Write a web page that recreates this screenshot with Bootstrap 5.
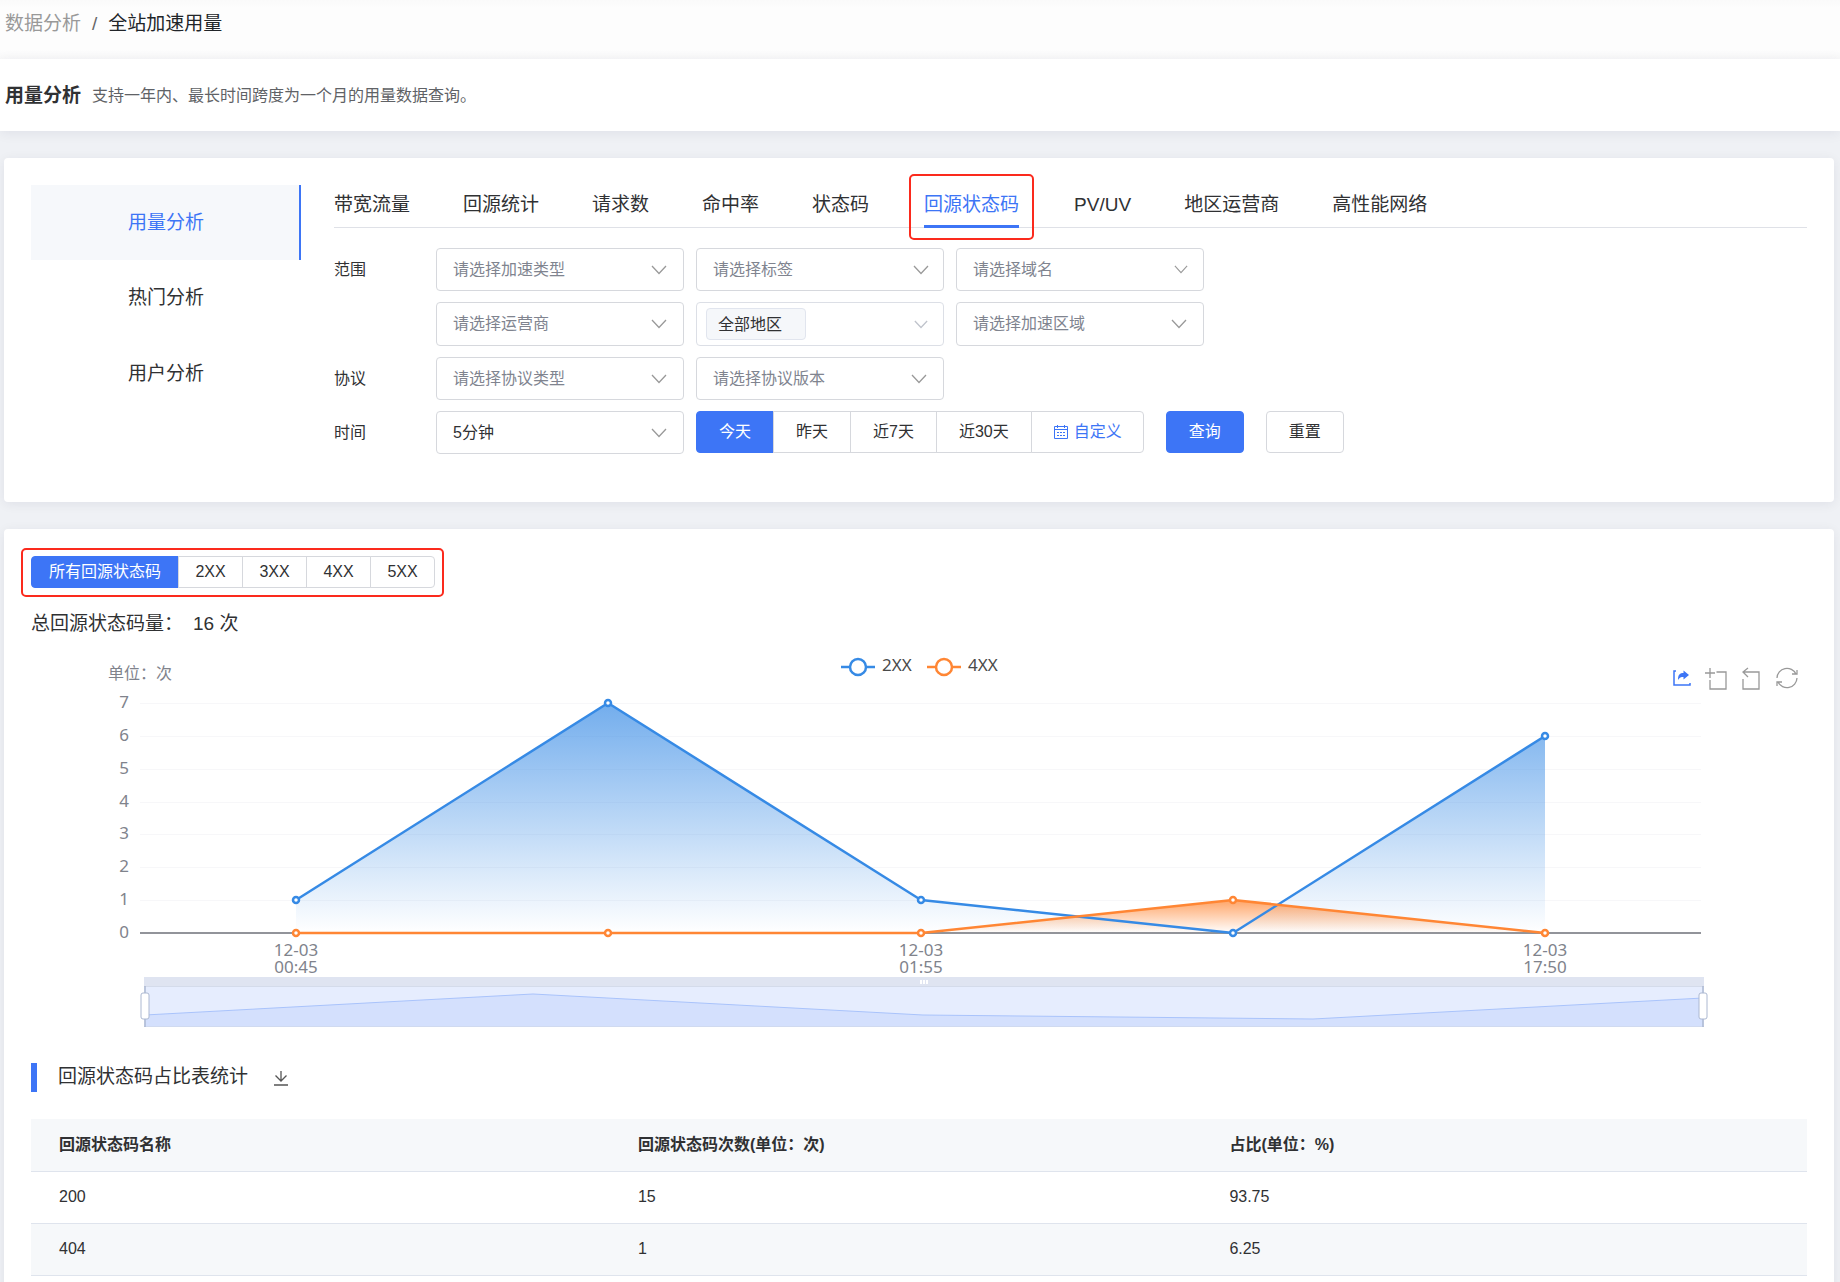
<!DOCTYPE html>
<html lang="zh-CN">
<head>
<meta charset="utf-8">
<meta name="viewport" content="width=device-width, initial-scale=1">
<title>全站加速用量</title>
<link href="https://cdn.jsdelivr.net/npm/bootstrap@5.3.0/dist/css/bootstrap.min.css" rel="stylesheet">
<style>
:root { --main: #3d75f6; --ink: #303133; --line: #d6d8dd; --alert: #fb2a1d; }
body { font: 16px/24px "Liberation Sans", "Noto Sans CJK SC", sans-serif; color: var(--ink); background: #eff1f5; }
a { text-decoration: none; color: inherit; }
.crumb-bar { height: 59px; padding: 0 5px 12px; font-size: 19px; background: linear-gradient(#fafafa, #fdfdfd 8px, #fdfdfd 50px, #f9f9fa); gap: 11px; }
.crumb-bar a { color: #999; }
.crumb-bar span { color: #666; }
.title-bar { height: 72px; padding: 2px 5px 0; gap: 11px; background: #fff; box-shadow: 0 2px 12px rgba(0,0,50,.07); }
.title-bar h1 { font-size: 19px; line-height: 24px; }
.title-bar p { color: #606266; }
main { padding: 27px 6px 0 4px; }
.panel { background: #fff; border-radius: 4px; padding: 27px; box-shadow: 0 2px 12px rgba(0,0,50,.07); }
.panel + .panel { margin-top: 27px; padding-bottom: 0; }
.filter-panel { min-height: 344px; }
.side { width: 270px; margin-right: 33px; font-size: 19px; }
.side a { height: 76px; }
.side .on { height: 75px; color: var(--main); background: #f6f8fb; box-shadow: inset -2px 0 var(--main); }
.tabs { height: 43px; gap: 53px; font-size: 19px; border-bottom: 1px solid #dfe1e7; margin-bottom: 20px; }
.tabs a { height: 43px; line-height: 40px; position: relative; white-space: nowrap; }
.tabs .on { margin: 0 2px; color: var(--main); border-bottom: 3px solid var(--main); }
.tabs .on::after { content: ""; position: absolute; inset: -11px -15px -15px; border: 2px solid var(--alert); border-radius: 5px; }
.filters { gap: 11px; }
.filters .label-col { width: 102px; }
.line-row { gap: 12px; }
.pick { width: 248px; height: 43px; padding: 0 40px 0 16px; font-size: 16px; line-height: 24px; color: #80848f; border: 1px solid var(--line); border-radius: 4px;
  background: #fff url("data:image/svg+xml,%3Csvg xmlns='http://www.w3.org/2000/svg' width='16' height='10' fill='none' stroke='%23999' stroke-width='1.3'%3E%3Cpath d='M1 1l7 7.500 7-7.500'/%3E%3C/svg%3E") no-repeat right 16px center / 16px 10px; }
.pick.set { color: var(--ink); }
.pick.near { background-position: right 14px center; }
.pick.slim { background-size: 14px 9px; background-position: right 15px center; }
.pick.tagged { height: 44px; padding: 0 9px; border-color: #dcdfe6; text-align: left;
  background-image: url("data:image/svg+xml,%3Csvg xmlns='http://www.w3.org/2000/svg' viewBox='0 0 16 10' width='16' height='10' fill='none' stroke='%23c0c4cc' stroke-width='1.500'%3E%3Cpath d='M1 1l7 7.500 7-7.500'/%3E%3C/svg%3E"); }
.pick.tall { height: 44px; }
.tag { display: inline-block; width: 100px; height: 32px; line-height: 32px; padding-left: 11px; color: var(--ink); background: #f5f7fa; border: 1px solid #e1e5ee; border-radius: 4px; }
.btn { --bs-btn-font-size: 16px; --bs-btn-line-height: 24px; --bs-btn-border-radius: 4px; --bs-btn-color: #303133; --bs-btn-border-color: #d6d8dd; --bs-btn-bg: #fff; }
.btn.on { --bs-btn-color: #fff; --bs-btn-bg: #3d75f6; --bs-btn-border-color: #3d75f6; }
.filters .btn { height: 42px; --bs-btn-padding-x: 22px; --bs-btn-padding-y: 8px; }
.filters .custom { --bs-btn-color: #3d75f6; --bs-btn-padding-x: 21px; gap: 5px; }
.act { margin-left: 10px; }
.codes { position: relative; }
.codes::after { content: ""; position: absolute; inset: -8px -9px -9px -10px; border: 2px solid var(--alert); border-radius: 5px; pointer-events: none; }
.codes .btn { height: 32px; min-width: 65px; --bs-btn-padding-x: 16px; --bs-btn-padding-y: 3px; }
.codes .on { --bs-btn-padding-x: 17px; }
.total { font-size: 19px; margin-top: 24px; gap: 10px; }
.chart { margin-top: 11px; position: relative; }
.chart svg { display: block; }
.chart text { font: 17px "Noto Sans", "Noto Sans CJK SC", sans-serif; fill: #80838c; }
.chart .key { fill: #4a4a4a; }
.chart .unit { font-size: 16px; }
.tools { position: absolute; right: 8px; top: 19px; gap: 11px; }
.tools button, .sub button { border: 0; padding: 0; background: none; width: 24px; height: 24px; }
.sub { margin-top: 28px; height: 29px; border-left: 6px solid var(--main); padding: 0 0 2px 21px; font-size: 19px; gap: 21px; }
.sub h2 { font-size: 19px; line-height: 24px; font-weight: 400; }
.data { margin: 27px 0 0; color: var(--ink); border-bottom: 1px solid #dfe4ed; }
.data > :not(caption) > * > * { height: 52px; padding: 0 28px; vertical-align: middle; border-bottom: 1px solid #dfe4ed; background: #fff; color: var(--ink); }
.data > thead > tr > th, .data > tbody > tr:nth-child(even) > td { background: #f6f8fa; }
.c1 { width: 32.6%; } .c2 { width: 33.3%; }
</style>
<script src="https://cdn.jsdelivr.net/npm/bootstrap@5.3.0/dist/js/bootstrap.bundle.min.js"></script>
</head>
<body>
<nav class="crumb-bar d-flex align-items-center" aria-label="breadcrumb"><a href="#">数据分析</a><span>/</span><a href="#" class="text-dark">全站加速用量</a></nav>
<header class="title-bar d-flex align-items-center"><h1 class="fw-bold mb-0">用量分析</h1><p class="mb-0">支持一年内、最长时间跨度为一个月的用量数据查询。</p></header>
<main>
<section class="panel filter-panel d-flex">
  <nav class="side flex-shrink-0">
    <a href="#" class="on d-flex align-items-center justify-content-center">用量分析</a>
    <a href="#" class="d-flex align-items-center justify-content-center">热门分析</a>
    <a href="#" class="d-flex align-items-center justify-content-center">用户分析</a>
  </nav>
  <div class="flex-grow-1">
    <nav class="tabs d-flex"><a href="#">带宽流量</a><a href="#">回源统计</a><a href="#">请求数</a><a href="#">命中率</a><a href="#">状态码</a><a href="#" class="on">回源状态码</a><a href="#">PV/UV</a><a href="#">地区运营商</a><a href="#">高性能网络</a></nav>
    <form class="filters d-flex flex-column">
      <div class="d-flex align-items-center"><label class="label-col" for="accel">范围</label>
        <div class="line-row d-flex">
          <select id="accel" class="form-select pick"><option>请选择加速类型</option></select>
          <select class="form-select pick near" aria-label="标签"><option>请选择标签</option></select>
          <select class="form-select pick slim" aria-label="域名"><option>请选择域名</option></select>
        </div></div>
      <div class="d-flex align-items-center"><span class="label-col"></span>
        <div class="line-row d-flex">
          <select class="form-select pick tall" aria-label="运营商"><option>请选择运营商</option></select>
          <button type="button" class="form-select pick slim tagged" aria-label="地区"><span class="tag">全部地区</span></button>
          <select class="form-select pick tall" aria-label="加速区域"><option>请选择加速区域</option></select>
        </div></div>
      <div class="d-flex align-items-center"><label class="label-col" for="proto">协议</label>
        <div class="line-row d-flex">
          <select id="proto" class="form-select pick"><option>请选择协议类型</option></select>
          <select class="form-select pick" aria-label="协议版本"><option>请选择协议版本</option></select>
        </div></div>
      <div class="d-flex align-items-center"><label class="label-col" for="step">时间</label>
        <div class="line-row d-flex">
          <select id="step" class="form-select pick set"><option>5分钟</option></select>
          <div class="btn-group">
            <button type="button" class="btn on">今天</button><button type="button" class="btn">昨天</button><button type="button" class="btn">近7天</button><button type="button" class="btn">近30天</button>
            <button type="button" class="btn custom d-flex align-items-center"><svg width="16" height="16" viewBox="0 0 16 16" fill="none" stroke="currentColor"><path d="M1.500 2.500h13v12h-13zM1.500 5.500h13M4.500 1v3M11.500 1v3M4 8.500h2M7 8.500h2M10 8.500h2M4 11.500h2M7 11.500h2M10 11.500h2"/></svg>自定义</button>
          </div>
          <button type="button" class="btn on act">查询</button>
          <button type="reset" class="btn act">重置</button>
        </div></div>
    </form>
  </div>
</section>
<section class="panel">
  <div class="btn-group codes"><button type="button" class="btn on">所有回源状态码</button><button type="button" class="btn">2XX</button><button type="button" class="btn">3XX</button><button type="button" class="btn">4XX</button><button type="button" class="btn">5XX</button></div>
  <div class="total d-flex"><span>总回源状态码量：</span><span>16 次</span></div>
  <div class="chart">
    <svg width="100%" viewBox="0 0 1776 388">
      <defs>
        <linearGradient id="gb" x1="0" y1="0" x2="0" y2="1"><stop offset="0" stop-color="#368ae5" stop-opacity=".7"/><stop offset="1" stop-color="#368ae5" stop-opacity="0"/></linearGradient>
        <linearGradient id="go" x1="0" y1="0" x2="0" y2="1"><stop offset="0" stop-color="#ff8634" stop-opacity=".75"/><stop offset="1" stop-color="#ff8634" stop-opacity="0"/></linearGradient>
      </defs>
      <text class="unit" x="77" y="32">单位：次</text>
      <g fill="#fff" stroke-width="2.500">
        <path d="M810 20h34" stroke="#368ae5"/><circle cx="827" cy="20" r="8" stroke="#368ae5"/>
        <path d="M896 20h34" stroke="#ff8634"/><circle cx="913" cy="20" r="8" stroke="#ff8634"/>
      </g>
      <text class="key" x="851" y="24">2XX</text><text class="key" x="937" y="24">4XX</text>
      <path d="M109 56H1670M109 89H1670M109 122H1670M109 155H1670M109 187H1670M109 220H1670M109 253H1670" stroke="#f7f7f9" shape-rendering="crispEdges"/>
      <path d="M109 286H1670" stroke="#6e7079" stroke-width="1.500"/>
      <g text-anchor="end"><text x="98" y="61">7</text><text x="98" y="94">6</text><text x="98" y="127">5</text><text x="98" y="160">4</text><text x="98" y="192">3</text><text x="98" y="225">2</text><text x="98" y="258">1</text><text x="98" y="291">0</text></g>
      <path d="M265 286V253L577 56L890 253L1202 286L1514 89V286z" fill="url(#gb)"/>
      <path d="M890 286L1202 253L1514 286z" fill="url(#go)"/>
      <path d="M265 253L577 56L890 253L1202 286L1514 89" fill="none" stroke="#368ae5" stroke-width="2.500" stroke-linejoin="round"/>
      <path d="M265 286H890L1202 253L1514 286" fill="none" stroke="#ff8634" stroke-width="2.500" stroke-linejoin="round"/>
      <g fill="#fff" stroke="#368ae5" stroke-width="2.500"><circle cx="265" cy="253" r="3"/><circle cx="577" cy="56" r="3"/><circle cx="890" cy="253" r="3"/><circle cx="1202" cy="286" r="3"/><circle cx="1514" cy="89" r="3"/></g>
      <g fill="#fff" stroke="#ff8634" stroke-width="2.500"><circle cx="265" cy="286" r="3"/><circle cx="577" cy="286" r="3"/><circle cx="890" cy="286" r="3"/><circle cx="1202" cy="253" r="3"/><circle cx="1514" cy="286" r="3"/></g>
      <g text-anchor="middle">
        <text><tspan x="265" y="309">12-03</tspan><tspan x="265" dy="17">00:45</tspan></text>
        <text><tspan x="890" y="309">12-03</tspan><tspan x="890" dy="17">01:55</tspan></text>
        <text><tspan x="1514" y="309">12-03</tspan><tspan x="1514" dy="17">17:50</tspan></text>
      </g>
      <path d="M113 330h1560v50H113z" fill="#e6edfe"/>
      <path d="M113 330h1560v9H113z" fill="#dfe4f1"/><path d="M113 339.500h1560" stroke="#d4dbea"/>
      <path d="M114 368L502 347L892 368L1282 372L1672 351V380H114z" fill="#d4e0fd"/>
      <path d="M114 368L502 347L892 368L1282 372L1672 351" fill="none" stroke="#a9c3fb"/>
      <path d="M113 379.500h1560" stroke="#d0daf0"/>
      <path d="M889 335h2m1 0h2m1 0h2" stroke="#fff" stroke-width="4"/>
      <path d="M114 339v41M1672 339v41" stroke="#acb8d1" stroke-width="1.500"/>
      <g fill="#fff" stroke="#acb8d1"><rect x="110" y="346" width="8" height="26" rx="2"/><rect x="1668" y="346" width="8" height="26" rx="2"/></g>
    </svg>
    <div class="tools d-flex">
      <button type="button" aria-label="导出"><svg width="24" height="24" fill="none" stroke="#3d75f6" stroke-width="1.500"><path d="M6 5H4v14h16v-2"/><path d="M8 14C8 8.500 10 7 13.500 7V4.500L19 9l-5.500 4.500V11C11 11 9.500 11.500 8 14z" fill="#3d75f6" stroke="none"/></svg></button>
      <button type="button" aria-label="区域缩放"><svg width="24" height="24" fill="none" stroke="#999" stroke-width="1.300"><path d="M0 7h10M5 2v10M11.500 6H21v17H5v-9"/></svg></button>
      <button type="button" aria-label="缩放还原"><svg width="24" height="24" fill="none" stroke="#999" stroke-width="1.300"><path d="M8 2L3 6l5 5M3 6h16v17H3v-10"/></svg></button>
      <button type="button" aria-label="还原"><svg width="24" height="24" fill="none" stroke="#999" stroke-width="1.300"><path d="M2 12a10 10 0 0 1 19-4M22 12a10 10 0 0 1-19 4M22 4v4h-5M2 20v-4h5"/></svg></button>
    </div>
  </div>
  <div class="sub d-flex align-items-center"><h2 class="mb-0">回源状态码占比表统计</h2><button type="button" aria-label="下载" class="d-flex"><svg width="24" height="24" fill="none" stroke="#555" stroke-width="1.300"><path d="M12 6v10M6.500 10.500L12 16l5.500-5.500M5 20h14"/></svg></button></div>
  <table class="table data">
    <thead><tr><th class="c1">回源状态码名称</th><th class="c2">回源状态码次数(单位：次)</th><th>占比(单位：%)</th></tr></thead>
    <tbody><tr><td>200</td><td>15</td><td>93.75</td></tr><tr><td>404</td><td>1</td><td>6.25</td></tr></tbody>
  </table>
  <div class="pb-4"></div>
</section>
</main>
</body>
</html>
